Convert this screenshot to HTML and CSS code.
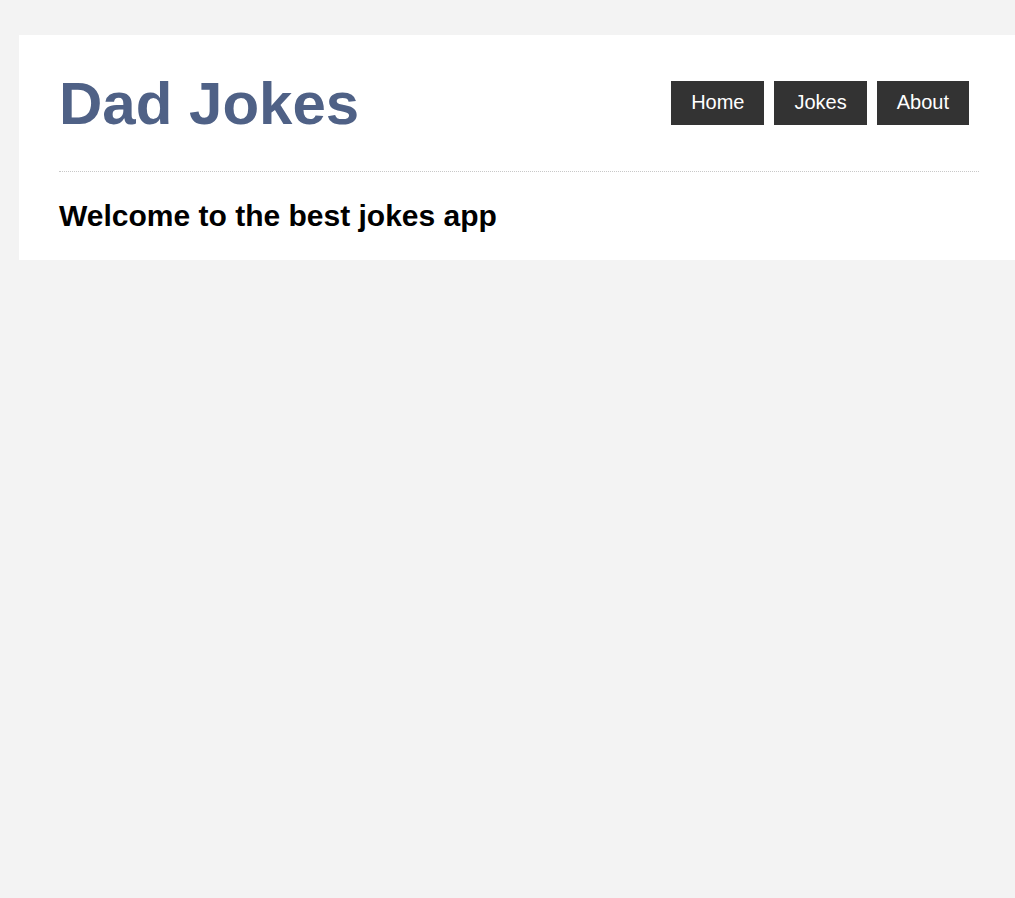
FILE: index.html
```html
<!DOCTYPE html>
<html lang="en">
<head>
<meta charset="utf-8">
<title>Dad Jokes</title>
<link rel="stylesheet" href="styles.css">
</head>
<body>
<div class="container">
  <header class="header">
    <h1 class="logo">Dad Jokes</h1>
    <nav class="nav">
      <a class="nav-btn" href="#">Home</a>
      <a class="nav-btn" href="#">Jokes</a>
      <a class="nav-btn" href="#">About</a>
    </nav>
  </header>
  <h2 class="welcome">Welcome to the best jokes app</h2>
</div>
</body>
</html>
```
FILE: styles.css
```css
html, body {
  margin: 0;
  padding: 0;
  background: #f3f3f3;
}
body {
  font-family: "Liberation Sans", Arial, sans-serif;
}
.container {
  background: #fff;
  width: 920px;
  margin: 35px 0 0 19px;
  padding: 34px 40px 27px;
}
.header {
  display: flex;
  justify-content: space-between;
  align-items: center;
  padding-bottom: 33px;
  border-bottom: 1px dotted #c8c8c8;
}
.logo {
  margin: 0;
  font-size: 60px;
  font-weight: bold;
  color: #4f6186;
  line-height: 69px;
}
.nav {
  display: flex;
  gap: 10px;
  margin-right: 10px;
  margin-bottom: 2px;
}
.nav-btn {
  display: flex;
  align-items: center;
  height: 44px;
  padding: 0 20px;
  background: #333;
  color: #fff;
  text-decoration: none;
  font-size: 20px;
}
.welcome {
  margin: 27px 0 0;
  font-size: 30px;
  font-weight: bold;
  color: #000;
  line-height: 34px;
}
```
